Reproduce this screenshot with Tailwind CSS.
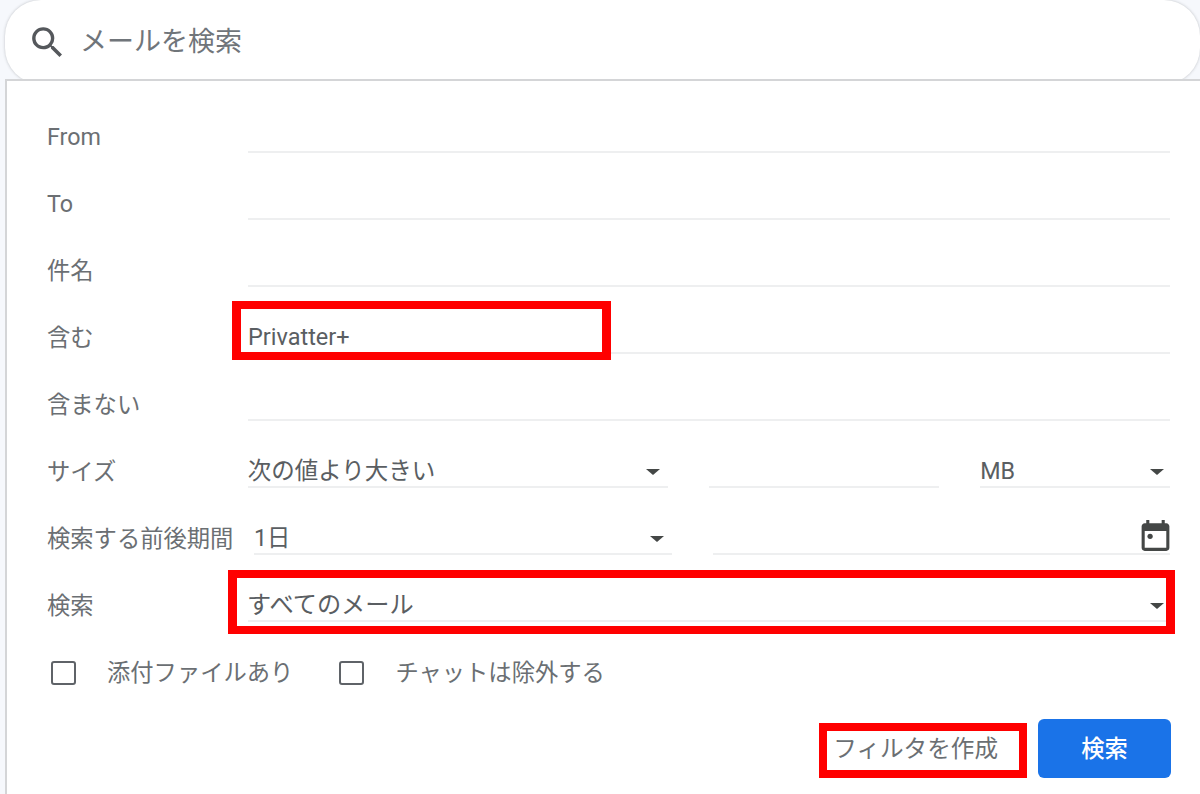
<!DOCTYPE html>
<html lang="ja">
<head>
  <meta charset="UTF-8">
  <title>メールを検索</title>
  <script src="https://cdn.jsdelivr.net/npm/@tailwindcss/browser@4"></script>
</head>
<body class="relative w-[1200px] h-[794px] overflow-hidden bg-[#f6f8fc] font-['Roboto','Noto_Sans_CJK_JP',sans-serif] text-[23.3px] leading-[30px] text-[#6b6f73]">

  <!-- Search bar -->
  <div class="ml-[5px] h-[84px] flex items-center pl-[22px] bg-white rounded-[36px] shadow-[0_0_3px_rgba(60,64,67,0.3)]">
    <svg class="w-[41px] h-[41px] text-[#55585c]" viewBox="0 0 24 24" fill="currentColor">
      <path d="M15.5 14h-.79l-.28-.27A6.47 6.47 0 0 0 16 9.5 6.5 6.5 0 1 0 9.5 16c1.61 0 3.09-.59 4.23-1.57l.27.28v.79l5 4.99L20.49 19l-4.99-5zm-6 0C7.01 14 5 11.99 5 9.5S7.01 5 9.5 5 14 7.01 14 9.5 11.99 14 9.5 14z"/>
    </svg>
    <span class="ml-[12px] text-[27px] text-[#70757a]">メールを検索</span>
  </div>

  <!-- Advanced search panel -->
  <div class="absolute left-[5px] top-[79px] w-[1200px] h-[720px] bg-white border-t-2 border-l-2 border-[#d4d5d7] pt-[5px] pl-[40px]">
    <div class="flex flex-col w-[1123px]">

      <div class="flex h-[67px]">
        <label class="w-[201px] flex items-end pb-[1px]">From</label>
        <div class="flex-1 border-b-2 border-[#eeeff0]"></div>
      </div>
      <div class="flex h-[67px]">
        <label class="w-[201px] flex items-end pb-[1px]">To</label>
        <div class="flex-1 border-b-2 border-[#eeeff0]"></div>
      </div>
      <div class="flex h-[67px]">
        <label class="w-[201px] flex items-end pb-[1px]">件名</label>
        <div class="flex-1 border-b-2 border-[#eeeff0]"></div>
      </div>
      <div class="flex h-[67px]">
        <label class="w-[201px] flex items-end pb-[1px]">含む</label>
        <div class="flex-1 flex items-end border-b-2 border-[#eeeff0] text-[23.5px] text-[#5a5e62]">Privatter+</div>
      </div>
      <div class="flex h-[67px]">
        <label class="w-[201px] flex items-end pb-[1px]">含まない</label>
        <div class="flex-1 border-b-2 border-[#eeeff0]"></div>
      </div>

      <div class="flex h-[67px]">
        <label class="w-[201px] flex items-end pb-[1px]">サイズ</label>
        <div class="w-[421px] flex items-end justify-between pr-[8px] border-b-2 border-[#eeeff0] text-[23.5px] text-[#5a5e62]">
          <span>次の値より大きい</span>
          <span class="w-0 h-0 mb-[11px] border-x-[7px] border-x-transparent border-t-[6px] border-t-[#444746]"></span>
        </div>
        <div class="w-[230px] ml-[41px] border-b-2 border-[#eeeff0]"></div>
        <div class="w-[190px] ml-[41px] flex items-end justify-between pr-[6px] border-b-2 border-[#eeeff0] text-[#5a5e62]">
          <span>MB</span>
          <span class="w-0 h-0 mb-[11px] border-x-[7px] border-x-transparent border-t-[6px] border-t-[#444746]"></span>
        </div>
      </div>

      <div class="flex h-[67px]">
        <label class="w-[207px] flex items-end pb-[1px] whitespace-nowrap">検索する前後期間</label>
        <div class="w-[418px] flex items-end justify-between pr-[8px] border-b-2 border-[#eeeff0] text-[#5a5e62]">
          <span>1日</span>
          <span class="w-0 h-0 mb-[11px] border-x-[7px] border-x-transparent border-t-[6px] border-t-[#444746]"></span>
        </div>
        <div class="flex-1 ml-[41px] flex items-end justify-end border-b-2 border-[#eeeff0]">
          <svg class="w-[37px] h-[37px] -mr-[4px] -mb-[1px] text-[#444746]" viewBox="0 0 24 24" fill="currentColor">
            <path fill-rule="evenodd" d="M19 4h-1V2h-2v2H8V2H6v2H5c-1.1 0-2 .9-2 2v14c0 1.1.9 2 2 2h14c1.1 0 2-.9 2-2V6c0-1.1-.9-2-2-2zm0 16H5V9h14v11z"/>
            <circle cx="8.5" cy="12.5" r="1.7"/>
          </svg>
        </div>
      </div>

      <div class="flex h-[67px]">
        <label class="w-[201px] flex items-end pb-[1px]">検索</label>
        <div class="flex-1 flex items-end justify-between pr-[6px] border-b-2 border-[#eeeff0] text-[#5a5e62]">
          <span class="-ml-[1px] text-[24.2px]">すべてのメール</span>
          <span class="w-0 h-0 mb-[11px] border-x-[7px] border-x-transparent border-t-[6px] border-t-[#444746]"></span>
        </div>
      </div>

      <div class="flex items-center h-[67px] mt-[17px] pl-[4px]">
        <span class="w-[25px] h-[24px] rounded-[3px] border-2 border-[#5f6368]"></span>
        <span class="ml-[31px]">添付ファイルあり</span>
        <span class="ml-[46px] w-[25px] h-[24px] rounded-[3px] border-2 border-[#5f6368]"></span>
        <span class="ml-[31px]">チャットは除外する</span>
      </div>

      <div class="flex justify-end items-center mt-[13px]">
        <span class="mr-[40px] text-[23.6px]">フィルタを作成</span>
        <button class="w-[133px] h-[59px] -mr-[1px] rounded-[6px] bg-[#1a73e8] text-white font-medium">検索</button>
      </div>
    </div>
  </div>

  <!-- Red annotation boxes -->
  <div class="absolute left-[232px] top-[301px] w-[379px] h-[59px] border-x-[9px] border-y-[8px] border-[#ff0000]"></div>
  <div class="absolute left-[228px] top-[570px] w-[947px] h-[64px] border-x-[9px] border-y-[8px] border-[#ff0000]"></div>
  <div class="absolute left-[819px] top-[723px] w-[208px] h-[55px] border-[8px] border-[#ff0000]"></div>
</body>
</html>
